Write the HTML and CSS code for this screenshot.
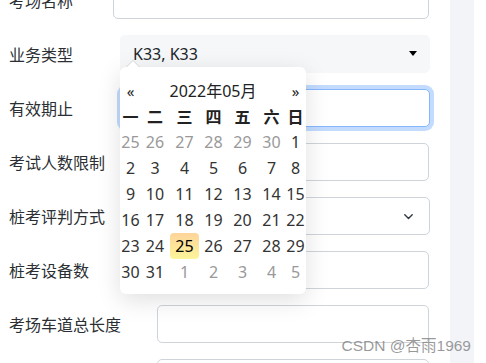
FILE: index.html
```html
<!DOCTYPE html>
<html lang="zh-CN">
<head>
<meta charset="utf-8">
<title>考场设置</title>
<link rel="stylesheet" href="styles.css">
</head>
<body>
<div class="page">
  <main class="form">
    <div class="row"><span class="lbl">考场名称</span><div class="ctl gap-40"></div></div>
    <div class="row"><span class="lbl">业务类型</span><div class="ctl sel-fill gap-47"><span>K33, K33</span><span class="caret"></span></div></div>
    <div class="row"><span class="lbl">有效期止</span><div class="ctl focus gap-48"></div></div>
    <div class="row"><span class="lbl">考试人数限制</span><div class="ctl gap-40"></div></div>
    <div class="row"><span class="lbl">桩考评判方式</span><div class="ctl sel gap-40"><svg class="chev" width="9" height="6" viewBox="0 0 9 6"><polyline points="0.8,0.8 4.5,4.6 8.2,0.8" fill="none" stroke="#343a40" stroke-width="1.4" stroke-linecap="round" stroke-linejoin="round"/></svg></div></div>
    <div class="row"><span class="lbl">桩考设备数</span><div class="ctl gap-40"></div></div>
    <div class="row"><span class="lbl">考场车道总长度</span><div class="ctl gap-36"></div></div>
    <div class="row"><span class="lbl">考场车道宽度</span><div class="ctl gap-52"></div></div>
  </main>
  <aside class="strip"></aside>

  <div class="datepicker">
    <div class="cal">
      <div class="hd nav">«</div>
      <div class="hd title">2022年05月</div>
      <div class="hd nav">»</div>

      <div class="dow">一</div><div class="dow">二</div><div class="dow">三</div><div class="dow">四</div><div class="dow">五</div><div class="dow">六</div><div class="dow">日</div>

      <div class="day old">25</div><div class="day old">26</div><div class="day old">27</div><div class="day old">28</div><div class="day old">29</div><div class="day old">30</div><div class="day">1</div>
      <div class="day">2</div><div class="day">3</div><div class="day">4</div><div class="day">5</div><div class="day">6</div><div class="day">7</div><div class="day">8</div>
      <div class="day">9</div><div class="day">10</div><div class="day">11</div><div class="day">12</div><div class="day">13</div><div class="day">14</div><div class="day">15</div>
      <div class="day">16</div><div class="day">17</div><div class="day">18</div><div class="day">19</div><div class="day">20</div><div class="day">21</div><div class="day">22</div>
      <div class="day">23</div><div class="day">24</div><div class="day today">25</div><div class="day">26</div><div class="day">27</div><div class="day">28</div><div class="day">29</div>
      <div class="day">30</div><div class="day">31</div><div class="day old">1</div><div class="day old">2</div><div class="day old">3</div><div class="day old">4</div><div class="day old">5</div>
    </div>
  </div>

  <div class="watermark">CSDN @杏雨1969</div>
</div>
</body>
</html>
```
FILE: styles.css
```css
* { box-sizing: border-box; }
html, body { margin: 0; padding: 0; background: #fff; }
body {
  font-family: "Noto Sans", "Noto Sans CJK SC", sans-serif;
  font-size: 16px;
  color: #212529;
  overflow: hidden;
}
.page {
  position: relative;
  display: flex;
  height: 363px;
  overflow: hidden;
}
.form {
  width: 450px;
  flex: none;
  padding: 0 20px 0 9px;
  margin-top: -19px;
  display: flex;
  flex-direction: column;
  gap: 16px;
}
.strip {
  width: 24px;
  flex: none;
  background: #f3f4f8;
}
.row {
  display: flex;
  align-items: center;
  height: 38px;
  flex: none;
}
.lbl {
  flex: none;
  white-space: nowrap;
  line-height: 24px;
  font-family: "Noto Sans CJK SC", sans-serif;
  color: #2b2f33;
}
.ctl {
  flex: 1;
  height: 38px;
  border: 1px solid #ced4da;
  border-radius: 5px;
  background: #fff;
  margin-right: 1px;
}
.gap-36 { margin-left: 36px; }
.gap-40 { margin-left: 40px; }
.gap-47 { margin-left: 47px; }
.gap-48 { margin-left: 48px; }
.gap-52 { margin-left: 52px; }

.sel-fill {
  margin-right: 0;
  background: #f6f7f9;
  border-color: #f6f7f9;
  display: flex;
  align-items: center;
  justify-content: space-between;
  padding: 0 12px;
  line-height: 24px;
}
.caret {
  width: 0;
  height: 0;
  border-top: 5px solid #000;
  border-left: 4.8px solid transparent;
  border-right: 4.8px solid transparent;
  margin-top: -1px;
}
.focus {
  margin-right: 0;
  border-color: #86b7fe;
  box-shadow: 0 0 0 4px rgba(13, 110, 253, 0.25);
}
.sel {
  margin-right: 0;
  display: flex;
  align-items: center;
  justify-content: flex-end;
  padding-right: 16px;
}
.chev { display: block; margin-top: 1px; }

/* datepicker popup */
.datepicker {
  position: absolute;
  left: 120px;
  top: 67px;
  width: 186px;
  padding: 12px 1px 9px 1px;
  background: #fff;
  border-radius: 6px;
  box-shadow: 0 6px 24px rgba(0, 0, 0, 0.13);
  z-index: 5;
}
.datepicker::before {
  content: "";
  position: absolute;
  top: -7px;
  left: 6px;
  border-left: 7px solid transparent;
  border-right: 7px solid transparent;
  border-bottom: 7px solid rgba(0, 0, 0, 0.12);
}
.datepicker::after {
  content: "";
  position: absolute;
  top: -6px;
  left: 7px;
  border-left: 6px solid transparent;
  border-right: 6px solid transparent;
  border-bottom: 6px solid #fff;
}
.cal {
  display: grid;
  grid-template-columns: 19px 30px 29px 29px 29px 29px 19px;
  grid-template-rows: 25px 25px repeat(6, 26px);
  text-align: center;
  color: #333;
}
.hd { line-height: 25px; color: #222; }
.nav { font-size: 15px; }
.title { grid-column: 2 / 7; }
.dow {
  line-height: 25px;
  font-weight: bold;
  font-family: "Noto Sans CJK SC", sans-serif;
  color: #222;
}
.day {
  line-height: 26px;
  white-space: nowrap;
  display: flex;
  justify-content: center;
}
.old { color: #999; }
.today {
  background: linear-gradient(to bottom, #fdd49a, #fdf59a);
  border-radius: 4px;
  color: #000;
}

.watermark {
  position: absolute;
  right: 15px;
  top: 336px;
  font-family: "Liberation Sans", "Noto Sans CJK SC", sans-serif;
  font-size: 15.5px;
  line-height: 20px;
  color: rgba(120, 120, 120, 0.75);
  white-space: nowrap;
  z-index: 6;
}
```
